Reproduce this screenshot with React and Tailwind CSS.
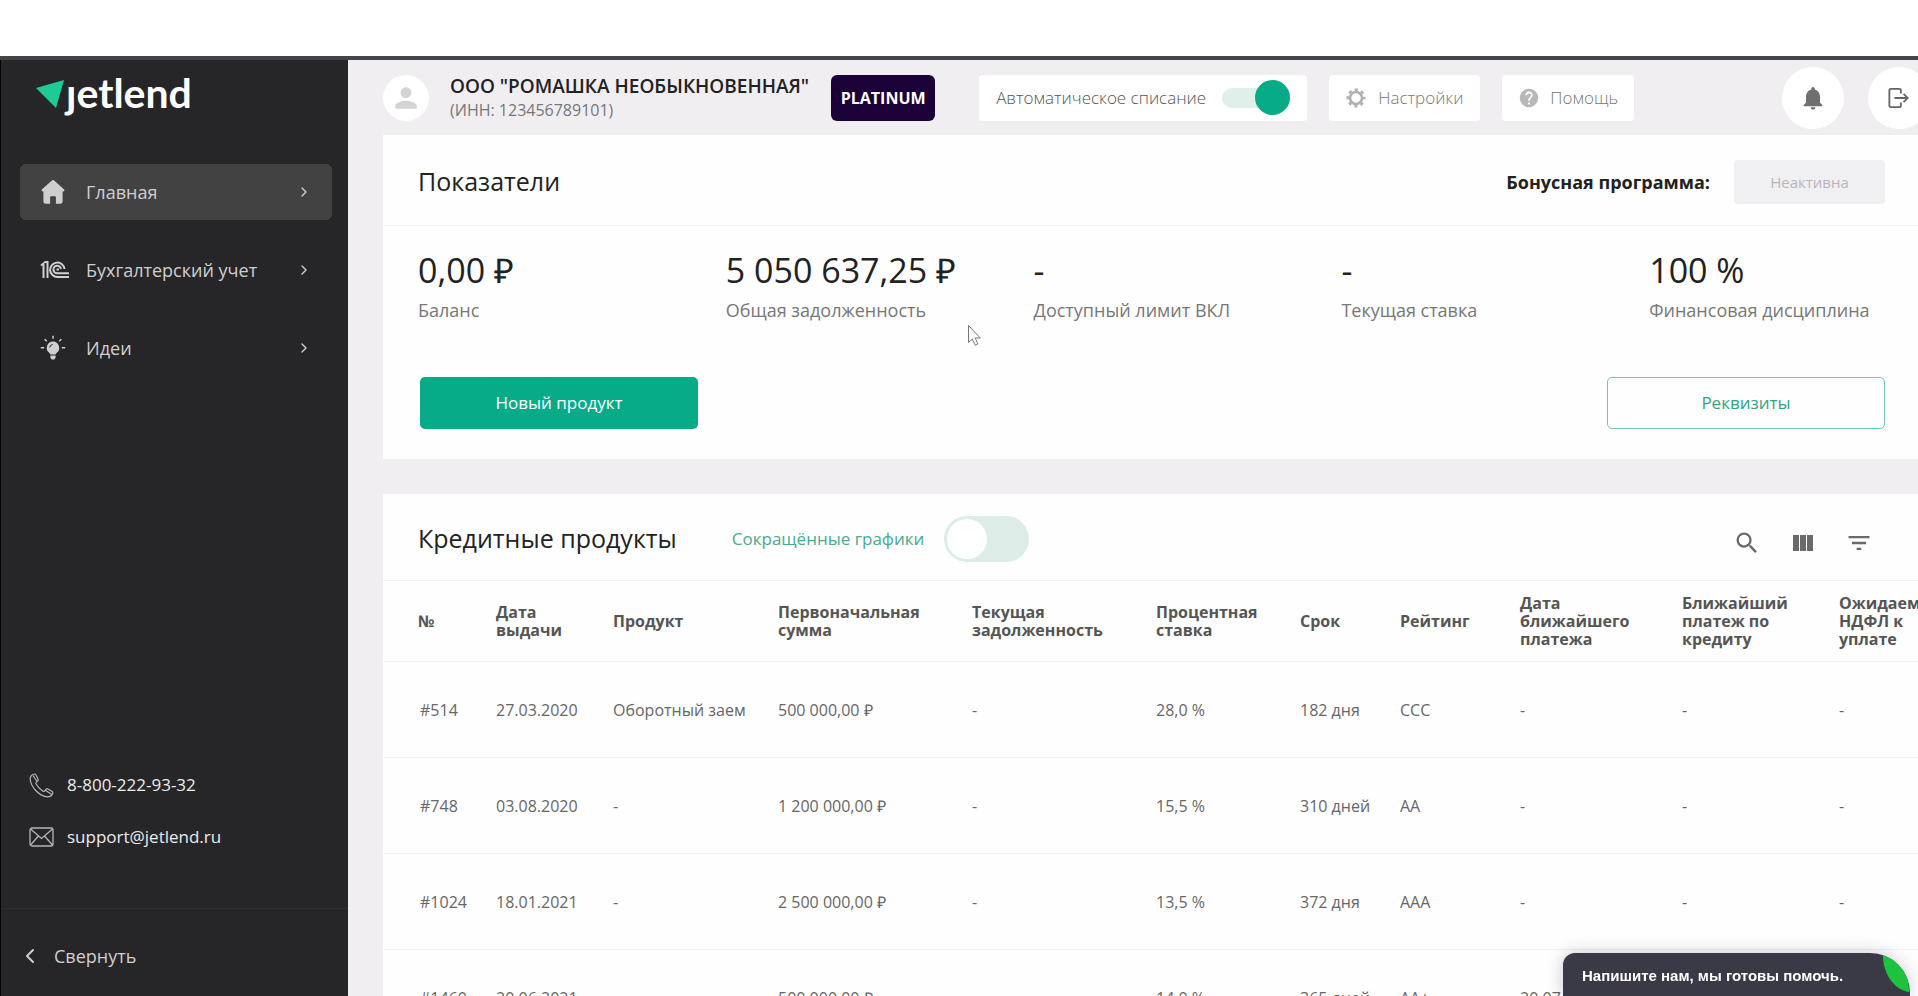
import { useState } from "react";
import { MdFilterList, MdHelp, MdNotifications, MdPerson, MdSearch } from "react-icons/md";
import { ChevronLeft, ChevronRight } from "lucide-react";

const NAV = [
    { label: "Главная", icon: HomeIcon, active: true },
    { label: "Бухгалтерский учет", icon: OneCIcon },
    { label: "Идеи", icon: BulbIcon },
];

const STATS = [
    { value: "0,00 ₽", label: "Баланс" },
    { value: "5 050 637,25 ₽", label: "Общая задолженность" },
    { value: "-", label: "Доступный лимит ВКЛ" },
    { value: "-", label: "Текущая ставка" },
    { value: "100 %", label: "Финансовая дисциплина" },
];

const COLUMNS = [
    { title: "№", width: "w-[113px]" },
    { title: "Дата выдачи", width: "w-[117px]" },
    { title: "Продукт", width: "w-[165px]" },
    { title: "Первоначальная сумма", width: "w-[194px]" },
    { title: "Текущая задолженность", width: "w-[184px]" },
    { title: "Процентная ставка", width: "w-36" },
    { title: "Срок", width: "w-[100px]" },
    { title: "Рейтинг", width: "w-[120px]" },
    { title: "Дата ближайшего платежа", width: "w-[162px]" },
    { title: "Ближайший платеж по кредиту", width: "w-[157px]" },
    { title: "Ожидаемый НДФЛ к уплате", width: "w-[140px]" },
];

const LOANS = [
    ["#514", "27.03.2020", "Оборотный заем", "500 000,00 ₽", "-", "28,0 %", "182 дня", "CCC", "-", "-", "-"],
    ["#748", "03.08.2020", "-", "1 200 000,00 ₽", "-", "15,5 %", "310 дней", "AA", "-", "-", "-"],
    ["#1024", "18.01.2021", "-", "2 500 000,00 ₽", "-", "13,5 %", "372 дня", "AAA", "-", "-", "-"],
    ["#1460", "20.06.2021", "-", "500 000,00 ₽", "-", "14,0 %", "365 дней", "AA+", "20.07.2021", "-", "0,00 ₽"],
];

export default function App() {
    return (
        <div className="flex h-screen flex-col overflow-hidden bg-white font-['Open_Sans',sans-serif] text-[#222]">
            <div className="h-14 shrink-0" />
            <div className="h-1 shrink-0 bg-[#454348]" />
            <div className="flex min-h-0 flex-1">
                <Sidebar />
                <main className="min-w-0 flex-1 overflow-hidden bg-[#f0eef1] pl-[35px]">
                    <Header />
                    <Indicators />
                    <Loans />
                </main>
            </div>
            <ChatWidget />
            <Cursor />
        </div>
    );
}

function Sidebar() {
    return (
        <aside className="flex w-[348px] shrink-0 flex-col border-l border-black bg-[#262628] text-[#cfcfd1]">
            <a href="#" className="ml-[35px] mt-3 block h-14" aria-label="jetlend">
                <Logo />
            </a>
            <nav className="mt-9 flex flex-col gap-[22px] pl-[19px] pr-4">
                {NAV.map(({ label, icon: Icon, active }) => (
                    <a
                        key={label}
                        href="#"
                        className={`flex h-14 items-center rounded-md px-5 text-lg ${
                            active ? "bg-[#424243]" : ""
                        }`}
                    >
                        <span className="flex w-[46px] shrink-0">
                            <Icon />
                        </span>
                        <span className="flex-1">{label}</span>
                        <ChevronRight className="size-4" strokeWidth={2} />
                    </a>
                ))}
            </nav>
            <div className="mt-auto flex flex-col gap-6 pb-[57px] pl-7 text-[17px]/7 font-medium text-[#ececee]">
                <a href="tel:88002229332" className="flex items-center gap-[13px]">
                    <PhoneIcon />
                    8-800-222-93-32
                </a>
                <a href="mailto:support@jetlend.ru" className="flex items-center gap-[13px]">
                    <MailIcon />
                    support@jetlend.ru
                </a>
            </div>
            <button className="flex h-[88px] items-center gap-3 border-t border-[#2f2f31] pl-[17px] pt-1.5 text-lg">
                <ChevronLeft className="size-6" strokeWidth={2} />
                Свернуть
            </button>
        </aside>
    );
}

function Header() {
    return (
        <header className="-mr-3 flex h-[75px] items-center">
            <div className="flex size-[46px] shrink-0 items-center justify-center rounded-full bg-white">
                <MdPerson className="size-8 text-[#d3d3d3]" />
            </div>
            <div className="ml-[21px] shrink-0 whitespace-nowrap">
                <div className="text-[19px]/6 font-semibold text-[#222]">ООО "РОМАШКА НЕОБЫКНОВЕННАЯ"</div>
                <div className="text-base/6 text-[#777]">(ИНН: 123456789101)</div>
            </div>
            <div className="ml-[22px] flex h-[46px] w-[104px] shrink-0 items-center justify-center rounded-md bg-[#1c0038] text-base font-bold text-white">
                PLATINUM
            </div>
            <label className="ml-11 flex h-[46px] w-[328px] shrink-0 items-center justify-between whitespace-nowrap rounded-sm bg-white px-[17px] text-[17px] font-light text-[#555]">
                Автоматическое списание
                <AutoSwitch />
            </label>
            <button className="ml-[22px] flex h-[46px] shrink-0 items-center gap-3 rounded-sm bg-white px-[17px] text-[17px] font-light text-[#777]">
                <GearIcon />
                Настройки
            </button>
            <button className="ml-[22px] flex h-[46px] shrink-0 items-center gap-2.5 rounded-sm bg-white px-4 text-[17px] font-light text-[#777]">
                <MdHelp className="size-[22px] text-[#b8b8b8]" />
                Помощь
            </button>
            <div className="ml-auto flex shrink-0 gap-6">
                <button aria-label="Уведомления" className="flex size-[62px] items-center justify-center rounded-full bg-white">
                    <MdNotifications className="size-7 text-[#6f6f6f]" />
                </button>
                <button aria-label="Выйти" className="flex size-[62px] items-center justify-center rounded-full bg-white">
                    <LogoutIcon />
                </button>
            </div>
        </header>
    );
}

function AutoSwitch() {
    const [on, setOn] = useState(true);
    return (
        <span className="relative flex h-9 w-[68px] items-center">
            <input
                type="checkbox"
                role="switch"
                checked={on}
                onChange={(e) => setOn(e.target.checked)}
                className="peer absolute inset-0 cursor-pointer appearance-none"
            />
            <span className="pointer-events-none h-5 w-full rounded-full bg-[#dff0ea]" />
            <span className="pointer-events-none absolute left-0 size-[35px] rounded-full bg-[#c8c8c8] peer-checked:left-auto peer-checked:right-0 peer-checked:bg-[#08ab88]" />
        </span>
    );
}

function Indicators() {
    return (
        <section className="bg-[#fefefe]">
            <div className="flex h-[91px] items-center justify-between border-b border-[#f4f4f5] pl-[35px] pr-[33px] pt-1">
                <h2 className="text-[25px] font-medium">Показатели</h2>
                <div className="flex items-center gap-6">
                    <span className="text-lg font-bold">Бонусная программа:</span>
                    <button disabled className="h-11 w-[151px] rounded-sm bg-[#f0eff2] text-[15px] text-[#b8b6ba]">
                        Неактивна
                    </button>
                </div>
            </div>
            <dl className="grid grid-cols-5 gap-[72px] pl-[35px] pr-[33px] pt-5">
                {STATS.map((stat) => (
                    <div key={stat.label} className="flex flex-col-reverse whitespace-nowrap">
                        <dt className="text-lg/8 text-[#777]">{stat.label}</dt>
                        <dd className="text-[34px]/[48px]">{stat.value}</dd>
                    </div>
                ))}
            </dl>
            <div className="flex justify-between pb-[30px] pl-[37px] pr-[33px] pt-[51px]">
                <button className="h-[52px] w-[278px] rounded-[5px] bg-[#08ab88] text-[17px] text-white">
                    Новый продукт
                </button>
                <button className="h-[52px] w-[278px] rounded-[5px] border border-[#6fc9b3] text-[17px] text-[#2fa588]">
                    Реквизиты
                </button>
            </div>
        </section>
    );
}

function Loans() {
    const [short, setShort] = useState(false);
    return (
        <section className="mt-[35px] bg-[#fefefe]">
            <div className="flex h-[86px] items-center pl-[35px] pr-[33px] pt-1">
                <h2 className="text-[25px] font-medium">Кредитные продукты</h2>
                <label className="ml-[55px] flex items-center gap-5 text-[17px] text-[#48ab90]">
                    Сокращённые графики
                    <span className="relative flex h-[46px] w-[85px] items-center rounded-full bg-[#dcede7] p-[3px]">
                        <input
                            type="checkbox"
                            role="switch"
                            checked={short}
                            onChange={(e) => setShort(e.target.checked)}
                            className="peer absolute inset-0 cursor-pointer appearance-none"
                        />
                        <span className="pointer-events-none size-10 rounded-full bg-white peer-checked:ml-auto" />
                    </span>
                </label>
                <div className="ml-auto flex gap-7 pr-3 pt-2 text-[#6a6a6a]">
                    <button aria-label="Поиск">
                        <MdSearch className="size-7" />
                    </button>
                    <button aria-label="Колонки">
                        <ColumnsIcon />
                    </button>
                    <button aria-label="Фильтр">
                        <MdFilterList className="size-7" />
                    </button>
                </div>
            </div>
            <div className="overflow-hidden">
                <table className="w-[1596px] table-fixed text-left text-base">
                    <thead>
                        <tr className="h-[81px] border-y border-[#f1f1f2] text-[#555]">
                            {COLUMNS.map((column) => (
                                <th
                                    key={column.title}
                                    className={`${column.width} pr-4 text-base/[18px] font-bold first:pl-[35px]`}
                                >
                                    {column.title}
                                </th>
                            ))}
                        </tr>
                    </thead>
                    <tbody>
                        {LOANS.map((loan) => (
                            <tr key={loan[0]} className="h-24 border-b border-[#f1f1f2] text-[#666]">
                                {loan.map((cell, i) => (
                                    <td key={i} className="whitespace-nowrap first:pl-[37px]">
                                        {cell}
                                    </td>
                                ))}
                            </tr>
                        ))}
                    </tbody>
                </table>
            </div>
        </section>
    );
}

function ChatWidget() {
    return (
        <button className="fixed bottom-0 right-2 flex h-[43px] w-[347px] items-center overflow-hidden rounded-tl-xl rounded-tr-[40px] bg-[#3a3a46] pl-[19px] pt-1 font-['Liberation_Sans',Arial,sans-serif] text-[15px] font-bold text-white shadow-[0_0_16px_rgba(40,30,70,0.25)]">
            Напишите нам, мы готовы помочь.
            <svg className="absolute right-0 top-0 h-[43px] w-7" viewBox="0 0 28 43">
                <path d="M1 0C17 3 27 20 27 39C12 37 0 20 1 0Z" fill="#1cc33c" />
            </svg>
        </button>
    );
}

function Cursor() {
    return (
        <svg className="pointer-events-none fixed left-[967px] top-[324px] h-[23px] w-[15px]" viewBox="0 0 15 23">
            <path
                d="M1.5 1.5V18.5L5.3 15L8.2 21.3L10.9 20L8.2 14H13.3Z"
                fill="#fff"
                stroke="#777"
            />
        </svg>
    );
}

function Logo() {
    return (
        <svg width="180" height="56" viewBox="0 0 180 56" fill="none">
            <path d="M0 16L28 8L20 36Z" fill="#1fcb94" />
            <text x="30" y="36" fill="#fff" fontFamily="Lato, sans-serif" fontWeight="700" fontSize="41">
                ȷetlend
            </text>
        </svg>
    );
}

function HomeIcon() {
    return (
        <svg width="26" height="26" viewBox="0 0 26 26" fill="currentColor">
            <path d="M11.6 1.7a2 2 0 0 1 2.8 0l9.5 8.6c1 1 .5 2.2-.8 2.2h-.5v10a2.3 2.3 0 0 1-2.3 2.3h-4.4v-6.6a1 1 0 0 0-1-1h-3.8a1 1 0 0 0-1 1v6.6H5.7a2.3 2.3 0 0 1-2.3-2.3v-10h-.5c-1.3 0-1.8-1.2-.8-2.2Z" />
        </svg>
    );
}

function OneCIcon() {
    return (
        <svg width="30" height="20" viewBox="0 0 30 20" fill="none" stroke="currentColor" strokeWidth="2">
            <path d="M1 5.5L3.5 3.5V18M4.5 2H7.5V18" />
            <path d="M24.5 9A7.2 7.2 0 1 0 17.5 17H29" />
            <path d="M21 9A3.8 3.8 0 1 0 17.5 13.300H29" />
            <path d="M16.500 9.500H19" />
        </svg>
    );
}

function BulbIcon() {
    return (
        <svg width="26" height="26" viewBox="0 0 26 26" fill="currentColor">
            <path d="M13 6.5a6.3 6.3 0 0 0-3.6 11.4c.6.5.9 1 .9 1.7h5.4c0-.7.3-1.2.9-1.7A6.3 6.3 0 0 0 13 6.5ZM10.4 20.600h5.200v2.200l-1.300 1.700h-2.600l-1.300-1.700Z" />
            <path
                d="M13 .8v3M4.700 4.200l2 2M21.300 4.200l-2 2M.8 12.800h3.400M21.800 12.800h3.400"
                stroke="currentColor"
                strokeWidth="1.5"
            />
            <path d="M9.700 12.500A3.300 3.300 0 0 1 12.600 9.500" fill="none" stroke="#262628" />
        </svg>
    );
}

function PhoneIcon() {
    return (
        <svg width="25" height="25" viewBox="0 0 25 25" fill="none" stroke="#b5b5b7" strokeWidth="1.2" strokeLinejoin="round">
            <path d="M5.5 1C3 1.5 1 3.5 1.2 6.5C2 14 9.5 22.5 18 23.8C21 24 23 22.5 23.8 20.3C24 19.5 23.8 19 23.2 18.6L19 15.9C18.3 15.5 17.5 15.7 17 16.3L15.6 18C15 18.6 14.3 18.6 13.6 18.1C10.8 16.2 8.6 13.7 7 10.8C6.7 10.2 6.8 9.6 7.4 9.1L8.7 8C9.3 7.5 9.4 6.7 9 6L7 1.900C6.700 1.200 6.200 .9 5.500 1Z" />
            <path d="M4 2.500L8 8.500M16.300 17.200L22.800 21.500" />
        </svg>
    );
}

function MailIcon() {
    return (
        <svg width="25" height="20" viewBox="0 0 25 20" fill="none" stroke="#b5b5b7" strokeWidth="1.3">
            <rect x="1" y="1" width="23" height="18" rx="2" />
            <path d="M1.5 2L12.500 11.500L23.500 2M1.500 18L9.500 9M23.500 18L15.500 9" />
        </svg>
    );
}

function GearIcon() {
    return (
        <svg width="20" height="20" viewBox="0 0 20 20" fill="none" stroke="#b0b0b0">
            <circle cx="10" cy="10" r="6" strokeWidth="2.5" />
            <circle cx="10" cy="10" r="8.3" strokeWidth="2.4" strokeDasharray="3.26 3.26" strokeDashoffset="1.63" />
        </svg>
    );
}

function LogoutIcon() {
    return (
        <svg width="22" height="22" viewBox="0 0 24 24" fill="none" stroke="#666" strokeWidth="2">
            <path d="M14 7V3.500A1.500 1.500 0 0 0 12.500 2H3A1.500 1.500 0 0 0 1.500 3.500V20.500A1.500 1.500 0 0 0 3 22H12.500A1.500 1.500 0 0 0 14 20.500V17" />
            <path d="M7 12H21M17 7.500L21.500 12L17 16.500" />
        </svg>
    );
}

function ColumnsIcon() {
    return (
        <svg width="28" height="28" viewBox="0 0 28 28" fill="currentColor">
            <path d="M4 6H10V22H4ZM11 6H17V22H11ZM18 6H24V22H18Z" />
        </svg>
    );
}
